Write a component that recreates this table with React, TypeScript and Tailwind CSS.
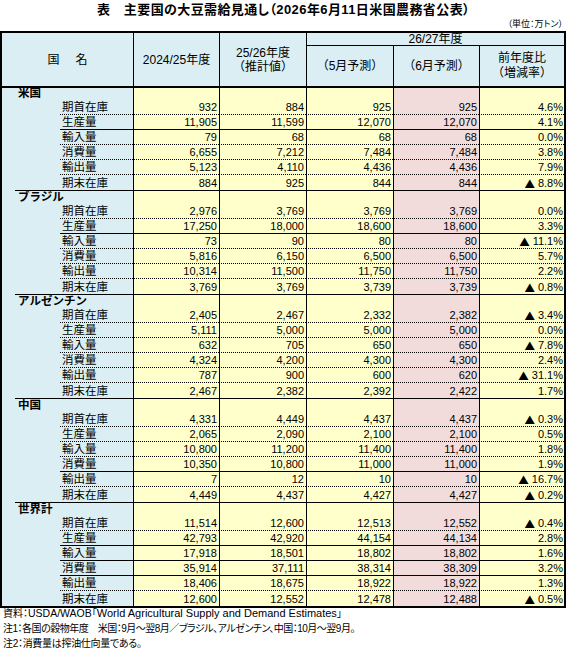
import React from 'react';

type B = 'd' | 's';
interface Row { label: string; v: string[] }
interface Group { name: string; borders: B[]; rows: Row[] }

const L = ['期首在庫', '生産量', '輸入量', '消費量', '輸出量', '期末在庫'];

function mk(name: string, borders: B[], data: string[][]): Group {
  return { name, borders, rows: data.map((v, i) => ({ label: L[i], v })) };
}

const groups: Group[] = [
  mk('米国', ['d', 's', 'd', 'd', 'd'], [
    ['932', '884', '925', '925', '4.6%'],
    ['11,905', '11,599', '12,070', '12,070', '4.1%'],
    ['79', '68', '68', '68', '0.0%'],
    ['6,655', '7,212', '7,484', '7,484', '3.8%'],
    ['5,123', '4,110', '4,436', '4,436', '7.9%'],
    ['884', '925', '844', '844', '▲8.8%'],
  ]),
  mk('ブラジル', ['d', 's', 'd', 'd', 'd'], [
    ['2,976', '3,769', '3,769', '3,769', '0.0%'],
    ['17,250', '18,000', '18,600', '18,600', '3.3%'],
    ['73', '90', '80', '80', '▲11.1%'],
    ['5,816', '6,150', '6,500', '6,500', '5.7%'],
    ['10,314', '11,500', '11,750', '11,750', '2.2%'],
    ['3,769', '3,769', '3,739', '3,739', '▲0.8%'],
  ]),
  mk('アルゼンチン', ['d', 'd', 'd', 'd', 'd'], [
    ['2,405', '2,467', '2,332', '2,382', '▲3.4%'],
    ['5,111', '5,000', '5,000', '5,000', '0.0%'],
    ['632', '705', '650', '650', '▲7.8%'],
    ['4,324', '4,200', '4,300', '4,300', '2.4%'],
    ['787', '900', '600', '620', '▲31.1%'],
    ['2,467', '2,382', '2,392', '2,422', '1.7%'],
  ]),
  mk('中国', ['d', 'd', 'd', 's', 'd'], [
    ['4,331', '4,449', '4,437', '4,437', '▲0.3%'],
    ['2,065', '2,090', '2,100', '2,100', '0.5%'],
    ['10,800', '11,200', '11,400', '11,400', '1.8%'],
    ['10,350', '10,800', '11,000', '11,000', '1.9%'],
    ['7', '12', '10', '10', '▲16.7%'],
    ['4,449', '4,437', '4,427', '4,427', '▲0.2%'],
  ]),
  mk('世界計', ['d', 's', 's', 's', 'd'], [
    ['11,514', '12,600', '12,513', '12,552', '▲0.4%'],
    ['42,793', '42,920', '44,154', '44,134', '2.8%'],
    ['17,918', '18,501', '18,802', '18,802', '1.6%'],
    ['35,914', '37,111', '38,314', '38,309', '3.2%'],
    ['18,406', '18,675', '18,922', '18,922', '1.3%'],
    ['12,600', '12,552', '12,478', '12,488', '▲0.5%'],
  ]),
];

const colW = ['w-[86px]', 'w-[87px]', 'w-[87px]', 'w-[86px]', 'w-[85px]'];
const colBg = ['bg-[#FFFFCC]', 'bg-[#FFFFCC]', 'bg-[#FFFFCC]', 'bg-[#F2DCDB]', 'bg-[#FFFFCC]'];
const colPr = ['pr-[2px]', 'pr-[2px]', 'pr-[2px]', 'pr-[2px]', 'pr-[1px]'];

function bottomCls(b: B | undefined) {
  if (b === 'd') return 'border-b border-black [border-bottom-style:dotted]';
  if (b === 's') return 'border-b border-black';
  return '';
}

function Val({ s }: { s: string }) {
  if (s.startsWith('▲')) {
    return (
      <span className="flex items-end">
        <span className="font-['Noto_Sans_CJK_JP',sans-serif] text-[10.5px] leading-[13px] mr-[3px]">▲</span>
        <span>{s.slice(1)}</span>
      </span>
    );
  }
  return <span>{s}</span>;
}

function TitleRow({ name, first }: { name: string; first: boolean }) {
  const top = first ? '' : 'border-t border-black';
  return (
    <div className={first ? 'flex h-[12px]' : 'flex h-[14px]'}>
      <div className="w-[13px] bg-[#DAEEF3]" />
      <div className={`w-[118px] bg-[#DAEEF3] pl-[3px] flex items-end font-bold text-[11.5px] leading-[13px] ${top}`}>
        {name}
      </div>
      {colW.map((w, i) => (
        <div key={i} className={`${w} ${colBg[i]} border-l border-black ${top}`} />
      ))}
    </div>
  );
}

function DataRow({ row, b }: { row: Row; b: B | undefined }) {
  const bc = bottomCls(b);
  return (
    <div className="flex h-[15px]">
      <div className="w-[58px] bg-[#DAEEF3]" />
      <div className={`w-[73px] bg-[#DAEEF3] pl-[2px] flex items-end text-[11.5px] leading-[14px] ${bc}`}>
        {row.label}
      </div>
      {row.v.map((v, i) => (
        <div
          key={i}
          className={`${colW[i]} ${colBg[i]} ${colPr[i]} border-l border-black flex items-end justify-end text-[11px] leading-[13px] ${bc}`}
        >
          <Val s={v} />
        </div>
      ))}
    </div>
  );
}

export default function App() {
  return (
    <div className="w-[567px] h-[650px] bg-white overflow-hidden text-black font-['Liberation_Sans','Noto_Sans_CJK_JP',sans-serif]">
      <div className="h-[20px] text-center font-bold text-[13px] leading-[20px] [font-feature-settings:'palt'] tracking-[0.4px]">
        表　主要国の大豆需給見通し（2026年6月11日米国農務省公表）
      </div>
      <div className="h-[11px] text-right text-[9px] leading-[9px] pr-[4px] [font-feature-settings:'palt']">
        （単位：万トン）
      </div>
      <div className="w-[566px] border-2 border-black">
        {/* header */}
        <div className="flex h-[55px] border-b-2 border-black bg-[#DAEEF3] text-[12px] leading-[14px]">
          <div className="w-[131px] flex items-center justify-center">
            <span>国</span>
            <span className="ml-[16px]">名</span>
          </div>
          <div className="w-[86px] border-l border-black flex items-center justify-center">
            2024/25年度
          </div>
          <div className="w-[87px] border-l border-black flex flex-col items-center justify-center">
            <div>25/26年度</div>
            <div>（推計値）</div>
          </div>
          <div className="w-[258px] border-l border-black flex flex-col">
            <div className="h-[13px] border-b border-black flex items-center justify-center leading-[12px]">
              26/27年度
            </div>
            <div className="flex flex-1">
              <div className="w-[86px] flex items-center justify-center">（5月予測）</div>
              <div className="w-[86px] border-l border-black flex items-center justify-center">（6月予測）</div>
              <div className="w-[85px] border-l border-black flex flex-col items-center justify-center leading-[15px]">
                <div>前年度比</div>
                <div>（増減率）</div>
              </div>
            </div>
          </div>
        </div>
        {/* body */}
        {groups.map((g, gi) => (
          <div key={g.name}>
            <TitleRow name={g.name} first={gi === 0} />
            {g.rows.map((r, ri) => (
              <DataRow key={ri} row={r} b={g.borders[ri]} />
            ))}
          </div>
        ))}
      </div>
      <div className="mt-[-2px] pl-[3px] text-[10px] leading-[15px] [font-feature-settings:'palt']">
        <div>
          資料：<span className="text-[10.5px]">USDA/WAOB</span>「<span className="text-[11px]">World Agricultural Supply and Demand Estimates</span>」
        </div>
        <div className="tracking-[-0.5px]">注1：各国の穀物年度　米国：9月～翌8月／ブラジル、アルゼンチン、中国：10月～翌9月。</div>
        <div className="tracking-[-0.3px]">注2：消費量は搾油仕向量である。</div>
      </div>
    </div>
  );
}
